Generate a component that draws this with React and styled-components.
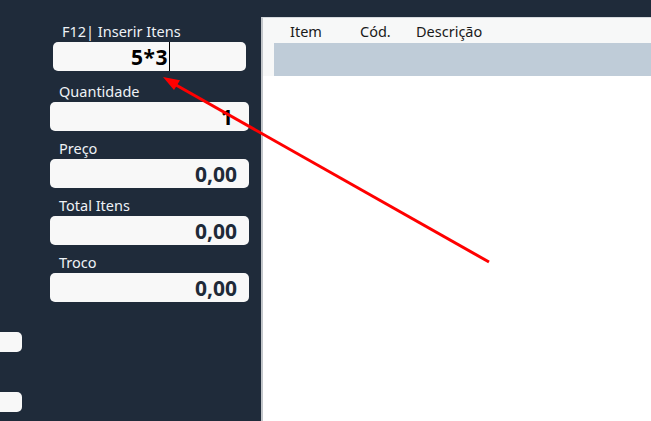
import React from "react";
import styled, { createGlobalStyle } from "styled-components";

const Global = createGlobalStyle`
  html, body { margin: 0; padding: 0; background: #1f2b3a; overflow: hidden; }
  body { font-family: "Noto Sans", "Open Sans", sans-serif; }
  #root { width: 651px; height: 421px; }
`;

const Screen = styled.div`
  position: relative;
  display: flex;
  width: 651px;
  height: 421px;
  background: #1f2b3a;
  overflow: hidden;
`;

const Sidebar = styled.div`
  width: 261px;
  flex: none;
  display: flex;
  flex-direction: column;
`;

const Fields = styled.div`
  display: flex;
  flex-direction: column;
  padding: 21px 12px 0 50px;
`;

const Field = styled.div`
  display: flex;
  flex-direction: column;
  margin-bottom: ${(p) => (p.$first ? "10px" : "7px")};
  padding: ${(p) => (p.$first ? "0 3px" : "0")};
`;

const Label = styled.div`
  height: 20px;
  line-height: 20px;
  font-size: 14.5px;
  color: #eef2f6;
  padding-left: 9px;
  margin-bottom: 1px;
  white-space: nowrap;
`;

const Box = styled.div`
  height: 29px;
  border-radius: 5px;
  background: #f8f8f8;
  overflow: hidden;
  display: flex;
  align-items: center;
  justify-content: ${(p) => (p.$center ? "center" : "flex-end")};
  padding: 0 ${(p) => (p.$center ? 0 : p.$pr || 12)}px 0 ${(p) => (p.$center ? 2 : 0)}px;
  box-sizing: border-box;
  font-size: 21px;
  font-weight: 700;
  color: ${(p) => (p.$black ? "#000" : "#1e2a38")};
`;

const Value = styled.span`
  line-height: 29px;
  margin-top: 2px;
  letter-spacing: ${(p) => (p.$wide ? "0.5px" : "0")};
`;

const Caret = styled.span`
  display: inline-block;
  width: 1px;
  height: 29px;
  background: #000;
  margin-left: 1px;
`;

const Buttons = styled.div`
  display: flex;
  flex-direction: column;
  gap: 40px;
  margin-top: 23px;
`;

const SideButton = styled.div`
  width: 22px;
  height: 20px;
  background: #f8f8f8;
  border-radius: 0 5px 5px 0;
`;

const Panel = styled.div`
  flex: 1;
  margin-top: 17px;
  background: #ffffff;
  border-left: 2px solid #c2c6ca;
  border-top: 1px solid #d6dade;
  display: flex;
  flex-direction: column;
`;

const HeaderRow = styled.div`
  display: flex;
  align-items: center;
  height: 25px;
  background: #f7f8f8;
  padding-left: 27px;
  font-size: 14.5px;
  color: #1a1a1a;
`;

const HeaderCell = styled.div`
  width: ${(p) => p.$w}px;
  flex: none;
  white-space: nowrap;
`;

const RowWrap = styled.div`
  background: #f7f8f8;
  padding-left: 11px;
`;

const SelectedRow = styled.div`
  height: 33px;
  background: #bfccd8;
`;

const Body = styled.div`
  flex: 1;
  background: #ffffff;
`;

const Overlay = styled.svg`
  position: absolute;
  left: 0;
  top: 0;
  pointer-events: none;
`;

export default function App() {
  return (
    <>
      <Global />
      <Screen>
        <Sidebar>
          <Fields>
            <Field $first>
              <Label>F12| Inserir Itens</Label>
              <Box $center $black>
                <Value $wide>5*3</Value>
                <Caret />
              </Box>
            </Field>
            <Field>
              <Label>Quantidade</Label>
              <Box $black $pr={16}>
                <Value>1</Value>
              </Box>
            </Field>
            <Field>
              <Label>Preço</Label>
              <Box>
                <Value>0,00</Value>
              </Box>
            </Field>
            <Field>
              <Label>Total Itens</Label>
              <Box>
                <Value>0,00</Value>
              </Box>
            </Field>
            <Field>
              <Label>Troco</Label>
              <Box>
                <Value>0,00</Value>
              </Box>
            </Field>
          </Fields>
          <Buttons>
            <SideButton />
            <SideButton />
          </Buttons>
        </Sidebar>
        <Panel>
          <HeaderRow>
            <HeaderCell $w={70}>Item</HeaderCell>
            <HeaderCell $w={56}>Cód.</HeaderCell>
            <HeaderCell $w={120}>Descrição</HeaderCell>
          </HeaderRow>
          <RowWrap>
            <SelectedRow />
          </RowWrap>
          <Body />
        </Panel>
        <Overlay width="651" height="421" viewBox="0 0 651 421">
          <line x1="489" y1="262" x2="176" y2="85" stroke="#ff0000" strokeWidth="3" />
          <polygon points="163,77 180,80.3 174,90" fill="#ff0000" />
        </Overlay>
      </Screen>
    </>
  );
}
